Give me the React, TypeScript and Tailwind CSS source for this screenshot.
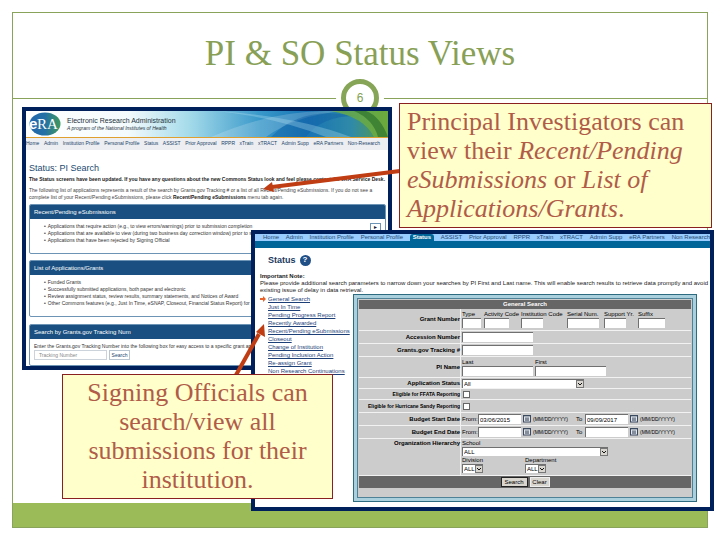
import type { ReactNode } from "react";

const mainNav = ["Home", "Admin", "Institution Profile", "Personal Profile", "Status", "ASSIST", "Prior Approval", "RPPR", "xTrain", "xTRACT", "Admin Supp", "eRA Partners", "Non-Research"];

const statusLinks = ["General Search", "Just In Time", "Pending Progress Report", "Recently Awarded", "Recent/Pending eSubmissions", "Closeout", "Change of Institution", "Pending Inclusion Action", "Re-assign Grant", "Non Research Continuations"];

const grantFields = [
  { id: "type", label: "Type", col: "w-[22px]", box: "w-[19px]" },
  { id: "activity", label: "Activity Code", col: "w-[37px]", box: "w-[25px]" },
  { id: "institution", label: "Institution Code", col: "w-[46px]", box: "w-[22px]" },
  { id: "serial", label: "Serial Num.", col: "w-[37px]", box: "w-[32px]" },
  { id: "support", label: "Support Yr.", col: "w-[34px]", box: "w-[22px]" },
  { id: "suffix", label: "Suffix", col: "w-[28px]", box: "w-[27px]" },
];

const box = "block h-[10px] border-t border-l border-[#707070] bg-white px-px text-[6px] leading-none text-black";

function Panel({ title, className, children }: { title: string; className: string; children: ReactNode }) {
  return (
    <section className={`overflow-hidden rounded-[2px] border border-[#6d93b5] bg-white ${className}`}>
      <h3 className="h-[14px] bg-[#1a4f81] pl-1 text-[6px] leading-[14px] text-white">{title}</h3>
      {children}
    </section>
  );
}

function Bullets({ items }: { items: string[] }) {
  return (
    <ul className="pl-[14px] text-[5px] leading-[7px] whitespace-nowrap text-[#333]">
      {items.map((t) => (
        <li key={t} className="flex gap-[2px]"><span>•</span>{t}</li>
      ))}
    </ul>
  );
}

function EraLogo() {
  return (
    <svg viewBox="0 0 32 24" className="ml-[3px] h-6 w-8 shrink-0" aria-label="eRA">
      <defs>
        <linearGradient id="era" x1="0" x2="1"><stop offset="0" stopColor="#2468ae" /><stop offset="0.5" stopColor="#2470a5" /><stop offset="1" stopColor="#3f9a5e" /></linearGradient>
      </defs>
      <ellipse cx="16" cy="12" rx="15.5" ry="11.5" fill="url(#era)" />
      <text x="0" y="17" fontSize="15" fontWeight="bold" fill="#fff" fontFamily="Liberation Sans, sans-serif">e</text>
      <text x="8" y="17" fontSize="15" fill="#fff" fontFamily="Liberation Serif, serif">RA</text>
    </svg>
  );
}

function Banner() {
  return (
    <header className="relative flex h-[27px] items-center border-b border-[#e0a030]">
      <svg viewBox="0 0 362 26" preserveAspectRatio="none" className="absolute inset-0 h-full w-full" aria-hidden="true">
        <defs>
          <linearGradient id="sky" x1="0" x2="1">
            <stop offset="0" stopColor="#fff" /><stop offset="0.28" stopColor="#f4fbfd" /><stop offset="0.45" stopColor="#a5dbea" /><stop offset="0.65" stopColor="#3797c9" /><stop offset="0.78" stopColor="#1974b4" /><stop offset="0.9" stopColor="#2f8aa8" /><stop offset="1" stopColor="#5c9c3c" />
          </linearGradient>
        </defs>
        <rect width="362" height="26" fill="url(#sky)" />
        <path d="M185 26 Q245 0 300 0 L318 0 Q270 4 240 26Z" fill="#fff" opacity=".18" />
        <path d="M245 26 Q275 -6 330 5 Q295 5 280 26Z" fill="#0f5fa5" opacity=".45" />
        <path d="M190 0 Q270 5 325 26 L300 26 Q250 6 190 0Z" fill="#bce9f5" opacity=".3" />
        <path d="M305 0 Q338 6 348 26 L362 26 L362 0Z" fill="#70ad3a" opacity=".75" />
        <path d="M328 0 Q347 8 352 26 L362 26 Q354 5 340 0Z" fill="#2f742f" opacity=".7" />
      </svg>
      <div className="relative flex items-center">
        <EraLogo />
        <div className="ml-[6px] whitespace-nowrap">
          <p className="text-[7px] leading-[8px] text-[#26323c]">Electronic Research Administration</p>
          <p className="text-[5px] leading-[7px] text-[#26323c] italic">A program of the National Institutes of Health</p>
        </div>
      </div>
    </header>
  );
}

function PiWindow() {
  return (
    <article className="absolute top-[107px] right-[328px] left-[22px] h-[263px] overflow-hidden border-4 border-[#00205b] bg-white">
      <Banner />
      <nav className="flex h-3 items-center justify-between bg-[#eceef1] pr-2 text-[5px] whitespace-nowrap text-[#24456b]">
        {mainNav.map((n) => <a key={n} href="#pi">{n}</a>)}
      </nav>
      <div className="pr-[2px] pl-[3px]">
        <h2 className="mt-[13px] text-[9px] leading-[11px] text-[#1c4a70]">Status: PI Search</h2>
        <p className="mt-[2px] text-[5px] leading-[7px] font-bold whitespace-nowrap text-[#222]">The Status screens have been updated. If you have any questions about the new Commons Status look and feel please contact the eRA Service Desk.</p>
        <p className="mt-1 text-[5px] leading-[7px] whitespace-nowrap text-[#444]">
          The following list of applications represents a result of the search by Grants.gov Tracking # or a list of all Recent/Pending eSubmissions. If you do not see a<br />
          complete list of your Recent/Pending eSubmissions, please click <b className="text-[#222]">Recent/Pending eSubmissions</b> menu tab again.
        </p>
        <Panel title="Recent/Pending eSubmissions" className="mt-[3px] h-[50px]">
          <div className="flex justify-between pt-1 pr-1">
            <Bullets items={["Applications that require action (e.g., to view errors/warnings) prior to submission completion", "Applications that are available to view (during two business day correction window) prior to submission", "Applications that have been rejected by Signing Official"]} />
            <button aria-label="Open" className="flex h-[10px] w-[11px] shrink-0 items-center justify-center border border-[#6d93b5] text-[5px] text-[#123]">►</button>
          </div>
        </Panel>
        <Panel title="List of Applications/Grants" className="mt-[6px] h-[57px]">
          <div className="pt-1">
            <Bullets items={["Funded Grants", "Successfully submitted applications, both paper and electronic", "Review assignment status, review results, summary statements, and Notices of Award", "Other Commons features (e.g., Just In Time, eSNAP, Closeout, Financial Status Report) for grants"]} />
          </div>
        </Panel>
        <Panel title="Search by Grants.gov Tracking Num" className="mt-[7px] h-[42px]">
          <form className="pt-1 pl-1 text-[5px] leading-[7px] whitespace-nowrap text-[#333]">
            <label htmlFor="track" className="block">Enter the Grants.gov Tracking Number into the following box for easy access to a specific grant application</label>
            <div className="flex gap-[2px]">
              <input id="track" placeholder="Tracking Number" className="h-[10px] w-[73px] border border-[#ccd3da] px-1 placeholder:text-[#888]" />
              <button type="button" className="h-[10px] w-[21px] border border-[#b9c6d2] text-[#24456b]">Search</button>
            </div>
          </form>
        </Panel>
      </div>
    </article>
  );
}

function Row({ label, htmlFor, className, top, small, children }: { label: string; htmlFor?: string; className: string; top?: boolean; small?: boolean; children: ReactNode }) {
  return (
    <div className={`flex border-b border-[#f2f2f2] ${className}`}>
      <label htmlFor={htmlFor} className={`flex w-[102px] shrink-0 justify-end border-r border-[#f2f2f2] font-bold ${small ? "text-[5px]" : ""} ${top ? "items-start pt-px" : "items-center"}`}>{label}</label>
      <div className={`flex min-w-0 flex-1 pl-px ${top ? "items-start" : "items-center"}`}>{children}</div>
    </div>
  );
}

function Select({ id, value, className }: { id: string; value: string; className: string }) {
  return (
    <div className={`relative h-[9px] ${className}`}>
      <select id={id} className="block h-full w-full appearance-none border-t border-l border-[#707070] bg-white pl-px text-[6px] leading-none"><option>{value}</option></select>
      <svg viewBox="0 0 8 8" className="pointer-events-none absolute top-px right-0 h-2 w-2" aria-hidden="true">
        <rect x=".5" y=".5" width="7" height="7" fill="#d8d6cf" stroke="#777" /><path d="M2 3l2 2 2-2" fill="none" stroke="#111" />
      </svg>
    </div>
  );
}

function Calendar() {
  return (
    <svg viewBox="0 0 8 8" className="mx-[2px] h-2 w-2 shrink-0" aria-hidden="true">
      <rect x=".5" y=".5" width="7" height="6.5" fill="#e4e8ee" stroke="#3c4a60" /><path d="M0 1h8M2 3h4M3 3v3M5 3v3M2 5h4" stroke="#3c4a60" fill="none" strokeWidth=".7" />
    </svg>
  );
}

function DateRange({ id, from, to }: { id: string; from: string; to: string }) {
  return (
    <>
      <span className="w-4">From:</span>
      <input id={id} defaultValue={from} className={`${box} w-[43px]`} />
      <Calendar />
      <span className="w-[43px] text-[5px]">(MM/DD/YYYY)</span>
      <label htmlFor={`${id}-to`} className="w-[9px]">To</label>
      <input id={`${id}-to`} defaultValue={to} className={`${box} w-[43px]`} />
      <Calendar />
      <span className="text-[5px]">(MM/DD/YYYY)</span>
    </>
  );
}

function SearchForm() {
  return (
    <form className="border border-[#2d6b80] bg-[#a9d0dc] p-[3px] text-[6px] leading-[7px] whitespace-nowrap text-black">
      <div className="border border-[#4f8297] bg-[#ccc] px-px pt-px pb-[9px]">
        <h3 className="h-[9px] bg-[#666] text-center leading-[9px] font-bold text-white">General Search</h3>
        <Row label="Grant Number" htmlFor="type" className="h-[22px]">
          {grantFields.map((f) => (
            <div key={f.id} className={f.col}>
              <label htmlFor={f.id} className="block">{f.label}</label>
              <input id={f.id} className={`${box} ${f.box}`} />
            </div>
          ))}
        </Row>
        <Row label="Accession Number" htmlFor="acc" className="h-[13px]"><input id="acc" className={`${box} w-[71px]`} /></Row>
        <Row label="Grants.gov Tracking #" htmlFor="ggt" className="h-[13px]"><input id="ggt" className={`${box} w-[71px]`} /></Row>
        <Row label="PI Name" htmlFor="last" className="h-[21px]">
          <div className="flex gap-[2px]">
            <div><label htmlFor="last" className="block">Last</label><input id="last" className={`${box} w-[71px]`} /></div>
            <div><label htmlFor="first" className="block">First</label><input id="first" className={`${box} w-[71px]`} /></div>
          </div>
        </Row>
        <Row label="Application Status" htmlFor="app" className="h-[11px]"><Select id="app" value="All" className="w-[122px]" /></Row>
        <Row label="Eligible for FFATA Reporting" htmlFor="ffata" className="h-[11px]" small><input id="ffata" type="checkbox" className="ml-px h-[7px] w-[7px] appearance-none border border-[#666] bg-white" /></Row>
        <Row label="Eligible for Hurricane Sandy Reporting" htmlFor="sandy" className="h-[13px]" small><input id="sandy" type="checkbox" className="ml-px h-[7px] w-[7px] appearance-none border border-[#666] bg-white" /></Row>
        <Row label="Budget Start Date" htmlFor="bs" className="h-[13px]"><DateRange id="bs" from="03/06/2015" to="09/09/2017" /></Row>
        <Row label="Budget End Date" htmlFor="be" className="h-[13px]"><DateRange id="be" from="" to="" /></Row>
        <Row label="Organization Hierarchy" htmlFor="school" className="h-[37px]" top>
          <div>
            <label htmlFor="school" className="block pt-px">School</label>
            <Select id="school" value="ALL" className="w-[146px]" />
            <div className="mt-px flex gap-[42px]">
              <div className="w-[21px]"><label htmlFor="division" className="block">Division</label><Select id="division" value="ALL" className="w-[21px]" /></div>
              <div className="w-[21px]"><label htmlFor="department" className="block">Department</label><Select id="department" value="ALL" className="w-[21px]" /></div>
            </div>
          </div>
        </Row>
        <div className="flex h-3 items-center justify-center gap-[2px] bg-[#666]">
          <button type="button" className="h-[10px] w-[27px] border border-[#222] bg-[#d8d6cf] leading-none">Search</button>
          <button type="button" className="h-[10px] w-5 border border-[#eee] bg-[#d8d6cf] leading-none">Clear</button>
        </div>
      </div>
    </form>
  );
}

function SoWindow() {
  return (
    <article className="absolute top-[230px] right-[6px] left-[251px] h-[281px] overflow-hidden border-4 border-[#00205b] bg-white">
      <nav className="flex h-[7px] items-center justify-between bg-[#99ccff] pl-2 text-[6px] leading-[7px] whitespace-nowrap text-[#23486e]">
        {mainNav.map((n) => <a key={n} href="#so" className={n === "Status" ? "rounded-t-[3px] bg-[#006699] px-[3px] font-bold text-white" : ""}>{n.replace("-", " ")}</a>)}
      </nav>
      <div className="h-[7px] bg-[#006699]" />
      <div className="pr-[13px] pl-[5px]">
        <h2 className="flex items-center gap-1 pt-[5px] pl-2 text-[9px] leading-[14px] font-bold text-[#1c3a60]">
          Status
          <span className="flex h-[11px] w-[11px] items-center justify-center rounded-full bg-[#1f4f86] text-[8px] text-white">?</span>
        </h2>
        <div className="mt-[6px] text-[6px] leading-[7px] whitespace-nowrap text-[#222]">
          <p className="font-bold">Important Note:</p>
          <p>Please provide additional search parameters to narrow down your searches by PI First and Last name. This will enable search results to retrieve data promptly and avoid<br />existing issue of delay in data retrieval.</p>
        </div>
        <div className="flex">
          <ul className="w-[93px] shrink-0 pt-px text-[6px] leading-[8px] whitespace-nowrap text-[#1d3f78]">
            {statusLinks.map((l, i) => (
              <li key={l} className="flex h-2 items-center">
                <span className="flex w-2">
                  {i === 0 && <svg viewBox="0 0 6 6" className="h-[6px] w-[6px]" aria-hidden="true"><path d="M0 2h3V0l3 3-3 3V4H0z" fill="#e8622a" /></svg>}
                </span>
                <a href="#status" className="underline">{l}</a>
              </li>
            ))}
          </ul>
          <div className="min-w-0 flex-1"><SearchForm /></div>
        </div>
      </div>
    </article>
  );
}

export default function App() {
  return (
    <main className="relative flex min-h-screen flex-col bg-white p-3 font-['Liberation_Sans',Arial,sans-serif]">
      <div className="flex flex-1 flex-col border border-[#8aa35a]">
        <h1 className="flex h-[86px] items-center justify-center border-b border-[#8aa35a] pb-[2px] font-['Liberation_Serif',serif] text-[35px] text-[#88a055]">PI &amp; SO Status Views</h1>
        <div className="flex-1" />
        <footer className="h-6 bg-[#9bbb59]" />
      </div>
      <div className="absolute inset-x-0 top-[74px] flex justify-center">
        <span className="flex h-12 w-12 items-center justify-center rounded-full bg-white">
          <span className="flex h-[38px] w-[38px] items-center justify-center rounded-full border-[5px] border-[#87a556] bg-white text-[12px] text-[#84a152]">6</span>
        </span>
      </div>
      <PiWindow />
      <SoWindow />
      <svg viewBox="0 0 720 540" className="pointer-events-none absolute top-0 left-0 h-[540px] w-full" aria-hidden="true">
        <g stroke="#c03c12" strokeWidth="4" fill="#c03c12">
          <path d="M400 171L272 187" /><path d="M263 189l9-7 2 10z" stroke="none" />
          <path d="M236 375L259 334" /><path d="M264 324l1 13-9-5z" stroke="none" />
        </g>
      </svg>
      <p className="absolute top-[103px] right-2 left-[399px] h-[125px] border border-[#8b2020] bg-[#ffffcc] px-[7px] pt-[3px] font-['Liberation_Serif',serif] text-[26px] leading-[29px] whitespace-nowrap text-[#b05c48]">
        Principal Investigators can<br />view their <i>Recent/Pending</i><br /><i>eSubmissions</i> or <i>List of</i><br /><i>Applications/Grants</i>.
      </p>
      <p className="absolute top-[374px] right-[387px] left-[62px] h-[125px] border border-[#8b2020] bg-[#ffffcc] pt-[3px] text-center font-['Liberation_Serif',serif] text-[26px] leading-[29px] whitespace-nowrap text-[#b05c48]">
        Signing Officials can<br />search/view all<br />submissions for their<br />institution.
      </p>
    </main>
  );
}
